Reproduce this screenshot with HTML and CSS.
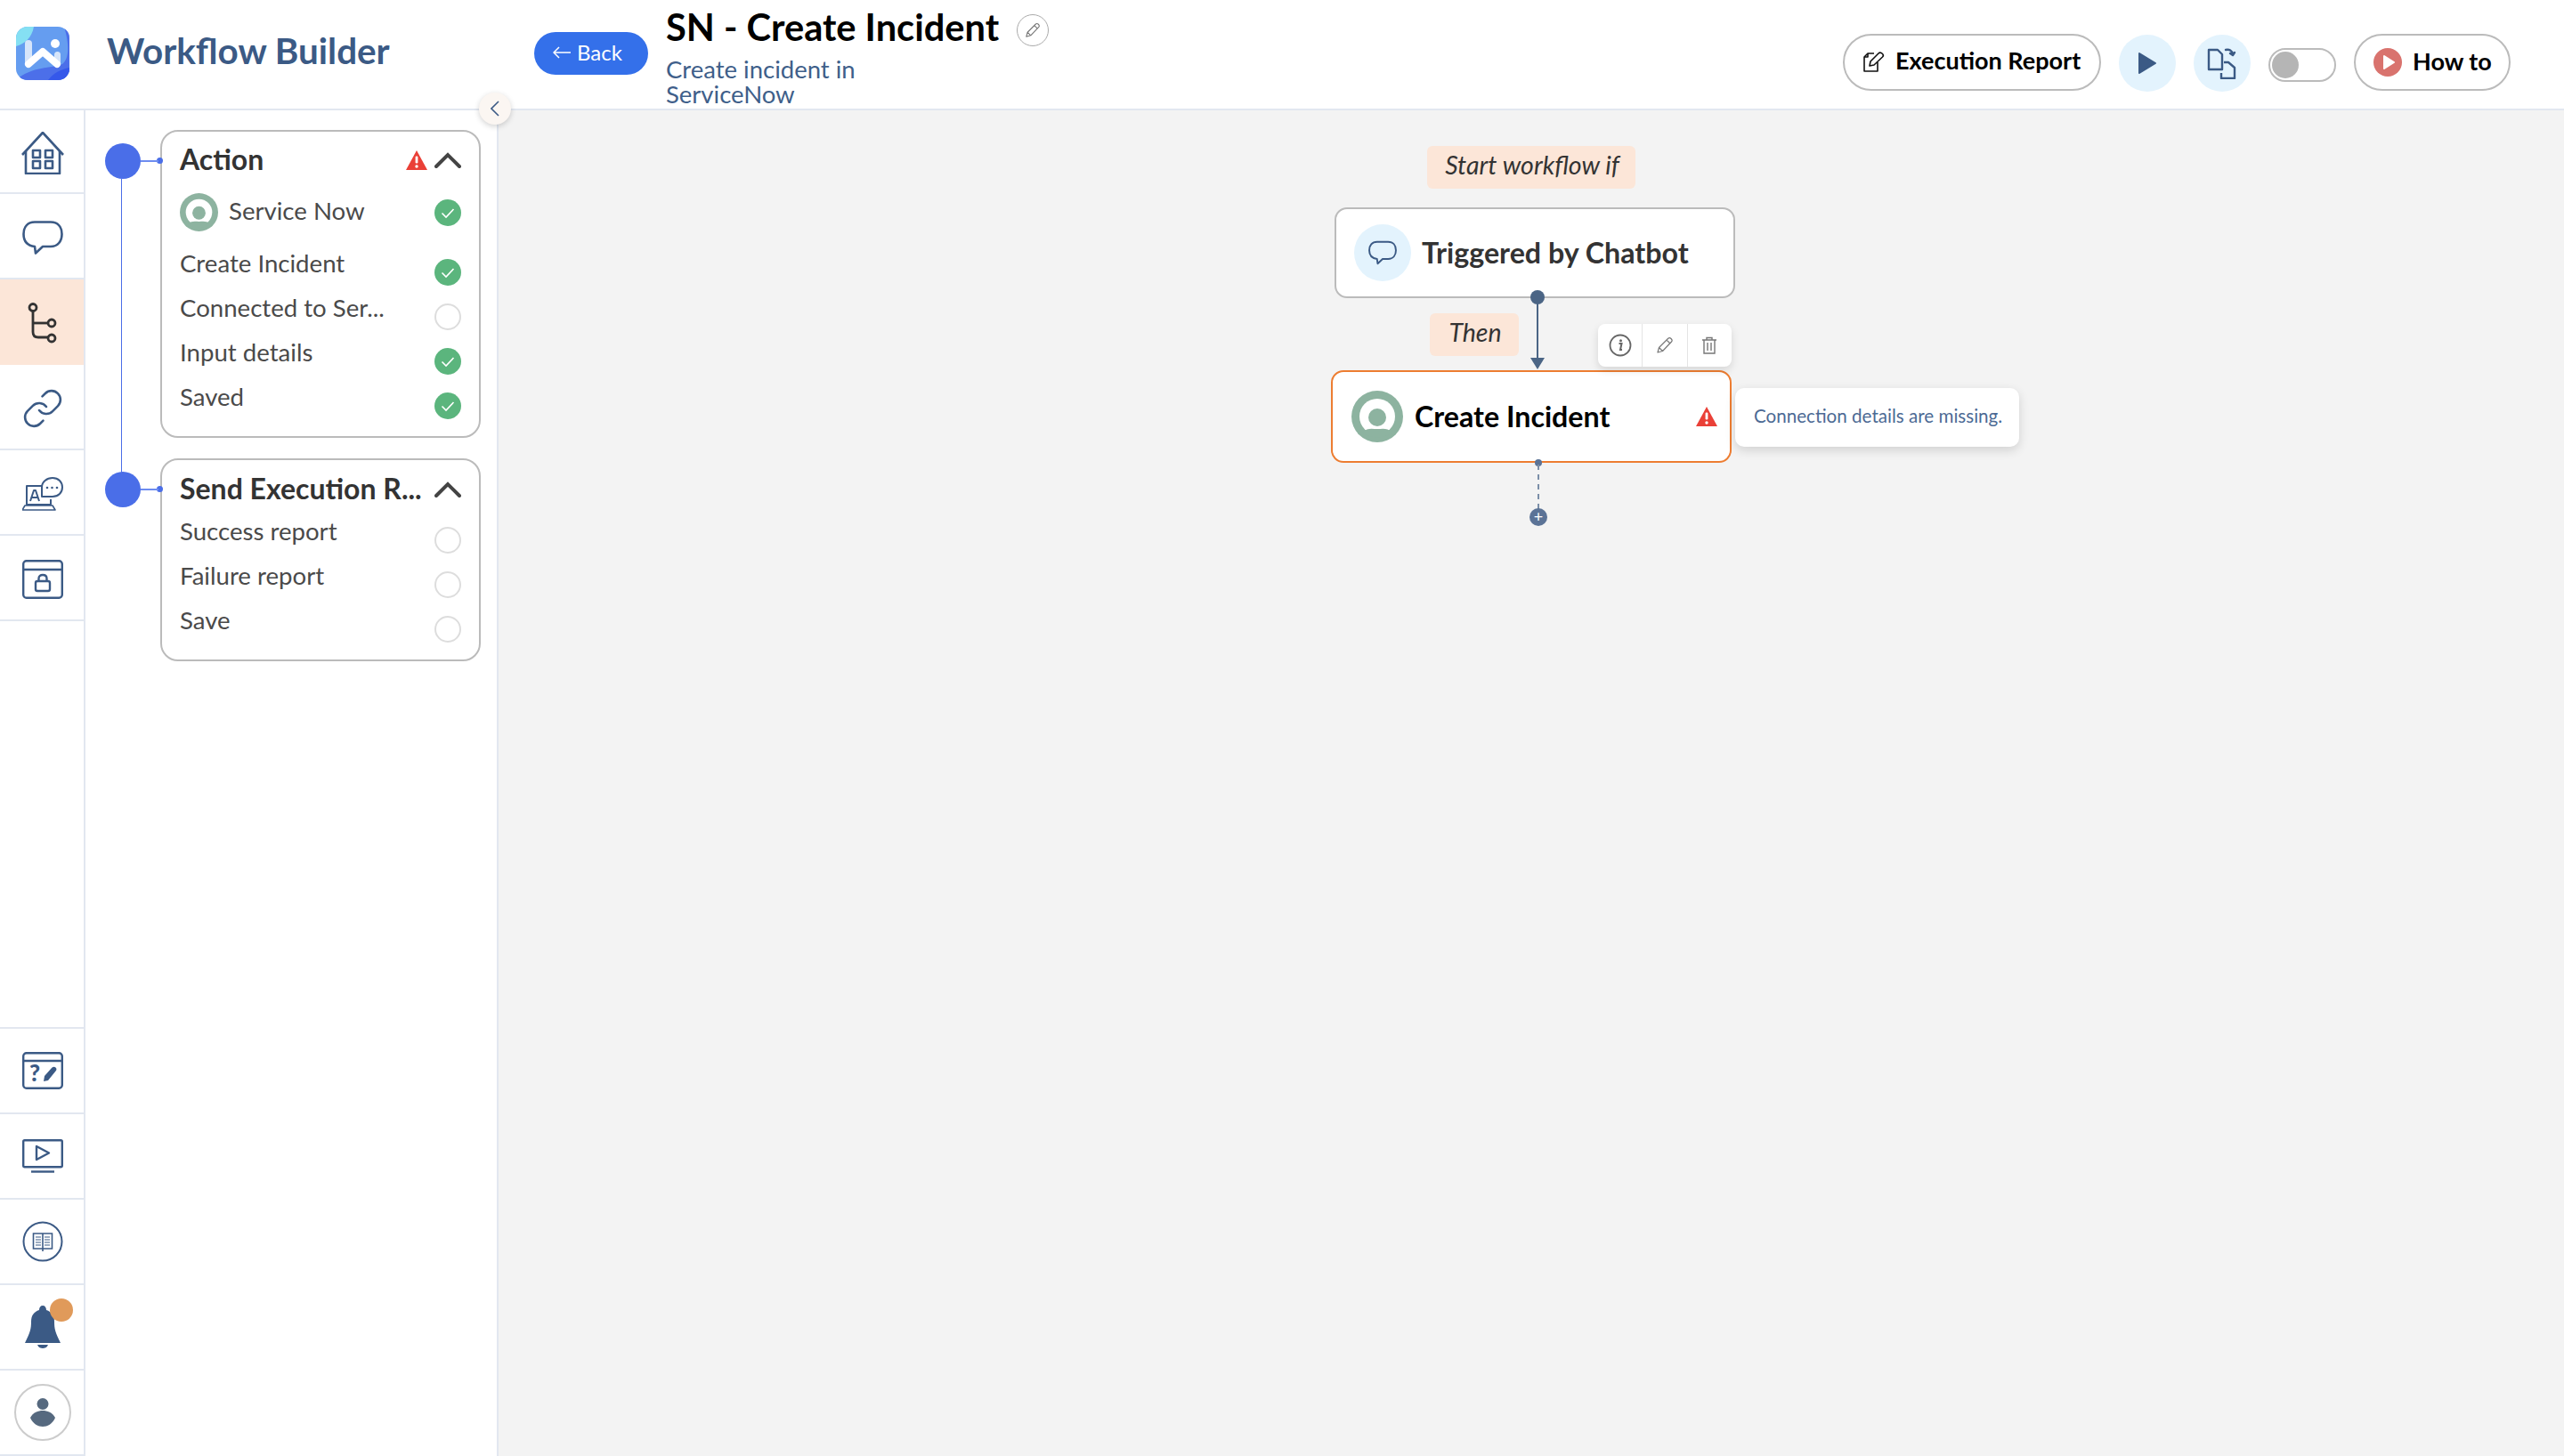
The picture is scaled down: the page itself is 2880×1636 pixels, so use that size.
FILE: index.html
```html
<!DOCTYPE html>
<html lang="en">
<head>
    <meta charset="UTF-8">
    <title>Workflow Builder</title>
    <link rel="stylesheet" href="styles.css">
</head>
<body>
    <!-- shared icons -->
    <svg class="icon-defs" width="0" height="0">
        <symbol id="sn-logo" viewBox="0 0 58 58">
            <circle cx="29" cy="29" r="29" fill="#8db3a0"/>
            <circle cx="29" cy="29" r="20" fill="#fff"/>
            <circle cx="29" cy="30" r="10" fill="#8db3a0"/>
            <path d="M12 47 C18 41 24 43 29 43 C34 43 40 41 46 47 C36 54 22 54 12 47Z" fill="#8db3a0"/>
        </symbol>
        <symbol id="warn" viewBox="0 0 24 22">
            <path d="M12 0 L24 22 H0Z" fill="#ea4037"/>
            <rect x="10.6" y="6.5" width="2.8" height="8" rx="1.2" fill="#fff"/>
            <circle cx="12" cy="18" r="1.7" fill="#fff"/>
        </symbol>
        <symbol id="check" viewBox="0 0 30 30">
            <circle cx="15" cy="15" r="15" fill="#5bb57d"/>
            <path d="M8.5 15.5 L13 20 L21.5 11" fill="none" stroke="#fff" stroke-width="1.6"/>
        </symbol>
        <symbol id="chevron" viewBox="0 0 30 18">
            <path d="M2 16 L15 3 L28 16" fill="none" stroke="#444" stroke-width="4" stroke-linecap="round"/>
        </symbol>
        <symbol id="pencil" viewBox="0 0 20 20">
            <path d="M2 18 L3.5 12.5 L13.5 2.5 C14.5 1.5 16 1.5 17 2.5 C18 3.5 18.5 5 17.5 6 L7.5 16.5Z M3.5 12.5 L7.5 16.5 M12 4 L16 8" fill="none" stroke="#777" stroke-width="1.2" stroke-linejoin="round"/>
        </symbol>
    </svg>

    <!-- Top bar -->
    <header class="topbar">
        <svg class="logo" width="60" height="60" viewBox="0 0 60 60">
            <defs><clipPath id="logo-clip"><rect width="60" height="60" rx="13"/></clipPath></defs>
            <g clip-path="url(#logo-clip)">
                <rect width="60" height="60" fill="#659df0"/>
                <path d="M0 0 H20 C18 12 10 19 0 22Z" fill="#85e0f3"/>
                <path d="M54 0 C60 20 60 36 52 42 C40 47 18 44 0 60 H60 V0Z" fill="#4c6fe9"/>
                <path d="M36 60 C42 52 50 48 60 46 V60Z" fill="#3558ea"/>
                <rect x="10" y="15" width="8" height="30" rx="4" fill="#d6e5fa"/>
                <rect x="43" y="28" width="7" height="16" rx="3.5" fill="#d6e5fa"/>
                <path d="M14 42 L30 28 L46 42" fill="none" stroke="#fff" stroke-width="8" stroke-linecap="round" stroke-linejoin="round"/>
                <circle cx="44" cy="19" r="5" fill="#fff"/>
            </g>
        </svg>
        <div class="brand">Workflow Builder</div>
        <button class="back-btn">
            <svg width="20" height="14" viewBox="0 0 20 14" fill="none" stroke="#fff" stroke-width="1.5"><path d="M20 7 H1 M7 1 L1 7 L7 13"/></svg>
            Back
        </button>
        <div class="title-block">
            <div class="title-row">
                <h1>SN - Create Incident</h1>
                <span class="edit-title"><svg width="18" height="18"><use href="#pencil"/></svg></span>
            </div>
            <p class="subtitle">Create incident in ServiceNow</p>
        </div>
        <div class="top-actions">
            <button class="pill report-btn">
                <svg width="25" height="24" viewBox="0 0 25 24" fill="none" stroke="#111" stroke-width="1.6" stroke-linejoin="round">
                    <path d="M13 2 H6 L2 6 V22 H17 V12"/>
                    <path d="M6 2 V6 H2"/>
                    <path d="M8 16 L9 11 L18 2 C19 1 21 1 22.5 2.5 C23.5 3.5 23.5 5 22.5 6 L13 15Z"/>
                </svg>
                Execution Report
            </button>
            <span class="round-btn">
                <svg width="22" height="26" viewBox="0 0 22 26"><path d="M2 2 L20 13 L2 24Z" fill="#3b5a85" stroke="#3b5a85" stroke-width="2" stroke-linejoin="round"/></svg>
            </span>
            <span class="round-btn">
                <svg width="34" height="36" viewBox="0 0 34 36" fill="none" stroke="#3b5a85" stroke-width="2.4" stroke-linejoin="round">
                    <path d="M2 3 H12 L17 8 V25 H2Z"/>
                    <path d="M19 17 H24 L31 23 V35 H16 V29"/>
                    <path d="M21 3 C25 2 28 4 29 8 M26 7 L29 9 L31 6" stroke-linecap="round"/>
                </svg>
            </span>
            <span class="toggle"><span class="knob"></span></span>
            <button class="pill howto-btn">
                <svg width="32" height="32" viewBox="0 0 32 32">
                    <circle cx="16" cy="16" r="16" fill="#d9736e"/>
                    <path d="M12 9 L23 16 L12 23Z" fill="#fff" stroke="#fff" stroke-width="2" stroke-linejoin="round"/>
                </svg>
                How to
            </button>
        </div>
    </header>

    <div class="main">
        <!-- Icon rail -->
        <nav class="rail">
            <div class="rail-group rail-top">
                <a class="rail-item rail-first">
                    <svg width="48" height="48" viewBox="0 0 48 48" fill="none" stroke="#3b5a85" stroke-width="2.6" stroke-linejoin="round">
                        <path d="M1 26 L24 1 L47 26"/>
                        <path d="M5 22 V47 H43 V22"/>
                        <rect x="13" y="21" width="8" height="8"/>
                        <rect x="27" y="21" width="8" height="8"/>
                        <rect x="13" y="33" width="8" height="8"/>
                        <rect x="27" y="33" width="8" height="8"/>
                    </svg>
                </a>
                <a class="rail-item">
                    <svg width="46" height="38" viewBox="0 0 46 38" fill="none" stroke="#3b5a85" stroke-width="2.6" stroke-linejoin="round">
                        <path d="M14 1.5 H32 C40 1.5 44.5 7 44.5 15 C44.5 23 40 29 32 29 H23 L15 36.5 L14 29 C6 28 1.5 23 1.5 15 C1.5 7 6 1.5 14 1.5Z"/>
                    </svg>
                </a>
                <a class="rail-item active">
                    <svg width="34" height="46" viewBox="0 0 34 46" fill="none" stroke="#333" stroke-width="2.8">
                        <circle cx="6" cy="5.5" r="4"/>
                        <path d="M6 10 V33 C6 37 8 39 12 39 H23"/>
                        <path d="M6 23 H23"/>
                        <circle cx="27" cy="23" r="4"/>
                        <circle cx="27" cy="40" r="4"/>
                    </svg>
                </a>
                <a class="rail-item">
                    <svg width="48" height="48" viewBox="0 0 24 24" fill="none" stroke="#3b5a85" stroke-width="1.3" stroke-linecap="round" stroke-linejoin="round">
                        <path d="M10 13a5 5 0 0 0 7.54.54l3-3a5 5 0 0 0-7.07-7.07l-1.72 1.71"/>
                        <path d="M14 11a5 5 0 0 0-7.54-.54l-3 3a5 5 0 0 0 7.07 7.07l1.71-1.71"/>
                    </svg>
                </a>
                <a class="rail-item">
                    <svg width="46" height="38" viewBox="0 0 46 38" fill="none" stroke="#3b5a85" stroke-width="2" stroke-linejoin="round">
                        <path d="M22 10 H5 V31 H32 V25"/>
                        <path d="M0 37 L3 32 H34 L37 37Z" stroke-width="1.6"/>
                        <path d="M9 27 L13 15 H15 L19 27 M10.5 23 H17.5"/>
                        <path d="M34 1 C40.5 1 45 5.5 45 11.5 C45 17.5 40.5 22 34 22 H22 V11.5 C22 5.5 27.5 1 34 1Z"/>
                        <circle cx="28" cy="12" r="1.3" fill="#3b5a85" stroke="none"/>
                        <circle cx="33.5" cy="12" r="1.3" fill="#3b5a85" stroke="none"/>
                        <circle cx="39" cy="12" r="1.3" fill="#3b5a85" stroke="none"/>
                    </svg>
                </a>
                <a class="rail-item">
                    <svg width="46" height="44" viewBox="0 0 46 44" fill="none" stroke="#3b5a85" stroke-width="2.4" stroke-linejoin="round">
                        <rect x="1.2" y="1.2" width="43.6" height="41.6" rx="3.5"/>
                        <path d="M1 11 H45"/>
                        <rect x="15" y="24" width="16" height="11" rx="2"/>
                        <path d="M18.5 24 V21 C18.5 18 20.5 17 23 17 C25.5 17 27.5 18 27.5 21 V24"/>
                    </svg>
                </a>
            </div>
            <div class="rail-group rail-bottom">
                <a class="rail-item">
                    <svg width="46" height="42" viewBox="0 0 46 42" fill="none" stroke="#3b5a85" stroke-width="2.4" stroke-linejoin="round">
                        <rect x="1.2" y="1.2" width="43.6" height="39.6" rx="3.5"/>
                        <path d="M1 10 H45"/>
                        <text x="8" y="33" class="help-mark">?</text>
                        <path d="M24 33 L25 27 L33 18 C34.5 16.5 36.5 16.5 37.5 17.5 C39 19 38.5 20.5 37.5 21.5 L29 32Z" fill="#3b5a85" stroke="none"/>
                    </svg>
                </a>
                <a class="rail-item">
                    <svg width="46" height="38" viewBox="0 0 46 38" fill="none" stroke="#3b5a85" stroke-width="2.4" stroke-linejoin="round">
                        <rect x="1.2" y="1.2" width="43.6" height="30" rx="1.5"/>
                        <path d="M16 8 L30 15.5 L16 23Z"/>
                        <path d="M10 36.5 H36"/>
                    </svg>
                </a>
                <a class="rail-item">
                    <svg width="46" height="46" viewBox="0 0 46 46" fill="none" stroke="#3b5a85">
                        <circle cx="23" cy="23" r="21.5" stroke-width="2"/>
                        <path d="M12.5 14 H33.5 V31 H12.5Z M23 14 V34" stroke-width="1.6"/>
                        <path d="M15 18 H21 M15 21 H21 M15 24 H21 M15 27 H21 M25 18 H31 M25 21 H31 M25 24 H31 M25 27 H31" stroke-width="1.2"/>
                    </svg>
                </a>
                <a class="rail-item bell-item">
                    <svg width="40" height="48" viewBox="0 0 40 48">
                        <path d="M20 0 C22.5 0 24 2 24 5 C30 7 33 11 33 18 C33 26 34 30 40 42 H0 C6 30 7 26 7 18 C7 11 10 7 16 5 C16 2 17.5 0 20 0Z" fill="#3b5a85"/>
                        <path d="M14 44 H26 C25 47 22 48 20 48 C18 48 15 47 14 44Z" fill="#3b5a85"/>
                    </svg>
                    <span class="badge"></span>
                </a>
                <a class="rail-item">
                    <span class="avatar">
                        <svg width="28" height="32" viewBox="0 0 28 32" fill="#56697f">
                            <circle cx="14" cy="6.5" r="6.5"/>
                            <path d="M0 22 C3 16 9 14 14 14 C19 14 25 16 28 22 C25 29 19 32 14 32 C9 32 3 29 0 22Z"/>
                        </svg>
                    </span>
                </a>
            </div>
        </nav>

        <!-- Steps panel -->
        <aside class="panel">
            <span class="collapse-btn">
                <svg width="10" height="18" viewBox="0 0 10 18"><path d="M9 1 L1 9 L9 17" fill="none" stroke="#3b5a85" stroke-width="1.6"/></svg>
            </span>
            <div class="step">
                <span class="step-dot"><span class="step-line"></span></span>
                <div class="card">
                    <div class="card-head">
                        <span class="card-title">Action</span>
                        <svg class="head-warn" width="24" height="22"><use href="#warn"/></svg>
                        <svg width="30" height="18"><use href="#chevron"/></svg>
                    </div>
                    <div class="row row-app">
                        <span class="row-label">
                            <svg width="43" height="43"><use href="#sn-logo"/></svg>
                            <span class="app-name">Service Now</span>
                        </span>
                        <svg class="check" width="30" height="30"><use href="#check"/></svg>
                    </div>
                    <div class="row">
                        <span class="row-label">Create Incident</span>
                        <svg class="check" width="30" height="30"><use href="#check"/></svg>
                    </div>
                    <div class="row">
                        <span class="row-label">Connected to Ser...</span>
                        <span class="check empty"></span>
                    </div>
                    <div class="row">
                        <span class="row-label">Input details</span>
                        <svg class="check" width="30" height="30"><use href="#check"/></svg>
                    </div>
                    <div class="row">
                        <span class="row-label">Saved</span>
                        <svg class="check" width="30" height="30"><use href="#check"/></svg>
                    </div>
                </div>
            </div>
            <div class="step">
                <span class="step-dot"></span>
                <div class="card card-send">
                    <div class="card-head">
                        <span class="card-title">Send Execution R...</span>
                        <svg width="30" height="18"><use href="#chevron"/></svg>
                    </div>
                    <div class="row">
                        <span class="row-label">Success report</span>
                        <span class="check empty"></span>
                    </div>
                    <div class="row">
                        <span class="row-label">Failure report</span>
                        <span class="check empty"></span>
                    </div>
                    <div class="row">
                        <span class="row-label">Save</span>
                        <span class="check empty"></span>
                    </div>
                </div>
            </div>
        </aside>

        <!-- Workflow canvas, nodes are placed freely -->
        <section class="canvas">
            <div class="tag tag-start">Start workflow if</div>
            <div class="node node-trigger">
                <span class="node-icon">
                    <svg width="32" height="28" viewBox="0 0 46 38" fill="none" stroke="#3b5a85" stroke-width="2.8" stroke-linejoin="round">
                        <path d="M14 1.5 H32 C40 1.5 44.5 7 44.5 15 C44.5 23 40 29 32 29 H23 L15 36.5 L14 29 C6 28 1.5 23 1.5 15 C1.5 7 6 1.5 14 1.5Z"/>
                    </svg>
                </span>
                <span class="node-name">Triggered by Chatbot</span>
            </div>
            <span class="port port-top"></span>
            <span class="link-line"></span>
            <span class="link-arrow"></span>
            <div class="tag tag-then">Then</div>
            <div class="node-tools">
                <span class="tool">
                    <svg width="26" height="26" viewBox="0 0 26 26">
                        <circle cx="13" cy="13" r="11.5" fill="none" stroke="#666" stroke-width="1.8"/>
                        <circle cx="13.5" cy="7.8" r="1.5" fill="#666"/>
                        <path d="M11.5 11 H14.5 L13 18 H15" fill="none" stroke="#666" stroke-width="2"/>
                    </svg>
                </span>
                <span class="tool"><svg width="20" height="20"><use href="#pencil"/></svg></span>
                <span class="tool">
                    <svg width="18" height="20" viewBox="0 0 18 20" fill="none" stroke="#777" stroke-width="1.4">
                        <path d="M1 4 H17 M6 4 V1.5 H12 V4 M3 4 V19 H15 V4 M7 7 V16 M11 7 V16"/>
                    </svg>
                </span>
            </div>
            <div class="node node-action">
                <svg width="58" height="58"><use href="#sn-logo"/></svg>
                <span class="node-name">Create Incident</span>
                <svg class="node-warn" width="24" height="22"><use href="#warn"/></svg>
            </div>
            <span class="port port-small"></span>
            <span class="link-dashed"></span>
            <span class="add-node">+</span>
            <div class="node-tip">Connection details are missing.</div>
        </section>
    </div>
</body>
</html>
```
FILE: styles.css
```css
* {
    box-sizing: border-box;
}
body {
    margin: 0;
    height: 1636px;
    display: flex;
    flex-direction: column;
    background-color: #fff;
    font-family: 'Lato', sans-serif;
    overflow: hidden;
}
button {
    font-family: inherit;
    cursor: pointer;
}
.icon-defs {
    position: absolute;
}

/* top bar */
.topbar {
    display: flex;
    align-items: flex-start;
    height: 124px;
    flex: none;
    border-bottom: 2px solid #e2e7f0;
}
.logo {
    margin: 30px 0 0 18px;
    flex: none;
}
.brand {
    width: 480px;
    margin: 35px 0 0 42px;
    font-size: 40.4px;
    line-height: 44px;
    font-weight: 700;
    color: #3b5a85;
    flex: none;
}
.back-btn {
    display: flex;
    align-items: center;
    gap: 7px;
    width: 128px;
    height: 48px;
    padding: 0 0 3px 21px;
    margin-top: 36px;
    border: none;
    border-radius: 24px;
    background-color: #3470ea;
    color: #fff;
    font-size: 24px;
    flex: none;
}
.title-block {
    margin: 5px 0 0 20px;
}
.title-row {
    display: flex;
    align-items: center;
    gap: 20px;
}
.title-row h1 {
    margin: 0;
    font-size: 41.6px;
    line-height: 50px;
    font-weight: 700;
    color: #000;
}
.edit-title {
    display: flex;
    align-items: center;
    justify-content: center;
    width: 36px;
    height: 36px;
    margin-top: 7px;
    border: 1px solid #aaa;
    border-radius: 50%;
}
.subtitle {
    width: 240px;
    margin: 9px 0 0;
    font-size: 27.5px;
    line-height: 28px;
    color: #3f5f8a;
}
.top-actions {
    display: flex;
    align-items: center;
    gap: 20px;
    margin: 37px 60px 0 auto;
}
.pill {
    display: flex;
    align-items: center;
    height: 64px;
    border: 2px solid #bbb;
    border-radius: 32px;
    background-color: #fff;
    color: #000;
    font-size: 27px;
    font-weight: 700;
}
.report-btn {
    width: 290px;
    gap: 12px;
    padding: 0 0 5px 20px;
}
.report-btn svg {
    margin-top: 5px;
}
.howto-btn {
    width: 176px;
    gap: 12px;
    padding: 0 0 4px 20px;
}
.howto-btn svg {
    margin-top: 4px;
}
.round-btn {
    display: flex;
    align-items: center;
    justify-content: center;
    width: 64px;
    height: 64px;
    margin-top: 2px;
    border-radius: 50%;
    background-color: #e3f3fd;
}
.toggle {
    display: block;
    width: 76px;
    height: 38px;
    padding: 2px;
    margin-top: 6px;
    border: 2px solid #bbb;
    border-radius: 19px;
}
.knob {
    display: block;
    width: 30px;
    height: 30px;
    border-radius: 50%;
    background-color: #b5b5b5;
}

/* layout under the top bar */
.main {
    display: flex;
    flex: 1;
    min-height: 0;
}
.rail {
    display: flex;
    flex-direction: column;
    justify-content: space-between;
    width: 96px;
    flex: none;
    border-right: 2px solid #e2e7f0;
}
.rail-item {
    position: relative;
    display: flex;
    align-items: center;
    justify-content: center;
    height: 96px;
    padding-left: 2px;
    border-bottom: 2px solid #e2e7f0;
}
.rail-top .rail-item {
    padding-top: 3px;
}
.rail-first {
    height: 94px;
}
.rail-bottom .rail-item:first-child {
    border-top: 2px solid #e2e7f0;
    height: 98px;
}
.rail-item.active {
    background-color: #fce6d8;
    border-bottom-color: #fce6d8;
}
.help-mark {
    font-family: 'Lato', sans-serif;
    font-size: 26px;
    font-weight: 900;
    fill: #3b5a85;
    stroke: none;
}
.badge {
    position: absolute;
    top: 15px;
    left: 56px;
    width: 26px;
    height: 26px;
    border-radius: 50%;
    background-color: #e09a5a;
}
.avatar {
    display: flex;
    align-items: center;
    justify-content: center;
    width: 64px;
    height: 64px;
    border: 2px solid #ccc;
    border-radius: 50%;
}

/* steps panel */
.panel {
    position: relative;
    display: flex;
    flex-direction: column;
    gap: 23px;
    width: 464px;
    flex: none;
    padding: 22px 0 0 22px;
    border-right: 2px solid #e2e7f0;
}
.collapse-btn {
    position: absolute;
    top: -20px;
    right: -16px;
    z-index: 2;
    display: flex;
    align-items: center;
    justify-content: center;
    width: 36px;
    height: 36px;
    border-radius: 50%;
    background-color: #fbf6f2;
    box-shadow: 0 2px 6px rgba(0, 0, 0, 0.18);
}
.step {
    display: flex;
    align-items: flex-start;
    gap: 22px;
}
.step-dot {
    position: relative;
    width: 40px;
    height: 40px;
    margin-top: 15px;
    flex: none;
    border-radius: 50%;
    background-color: #4a6ee8;
}
.step-dot::after {
    content: "";
    position: absolute;
    top: 19px;
    left: 40px;
    width: 20px;
    height: 2px;
    background-color: #6d8cf0;
}
.step-dot::before {
    content: "";
    position: absolute;
    top: 16px;
    left: 58px;
    width: 7px;
    height: 7px;
    border-radius: 50%;
    background-color: #4a6ee8;
}
.step-line {
    position: absolute;
    top: 40px;
    left: 18px;
    width: 1px;
    height: 330px;
    background-color: #4a6ee8;
}
.card {
    width: 360px;
    padding: 10px 20px 9px 20px;
    border: 2px solid #bbb;
    border-radius: 20px;
    background-color: #fff;
}
.card-send {
    padding-top: 11px;
}
.card-head {
    display: flex;
    align-items: center;
    height: 44px;
    margin-bottom: 10px;
}
.card-title {
    flex: 1;
    margin-top: -3px;
    font-size: 32px;
    font-weight: 700;
    color: #333;
    white-space: nowrap;
}
.head-warn {
    margin-right: 8px;
}
.row {
    display: flex;
    justify-content: space-between;
    align-items: flex-start;
    height: 50px;
}
.row-label {
    display: flex;
    align-items: center;
    gap: 12px;
    font-size: 27.6px;
    line-height: 30px;
    color: #4a4a4a;
}
.app-name {
    margin-top: -4px;
}
.check {
    display: block;
    width: 30px;
    height: 30px;
    margin-top: 10px;
    flex: none;
}
.check.empty {
    border: 2px solid #ddd;
    border-radius: 50%;
}
.row-app {
    height: 53px;
    margin-bottom: 16px;
    align-items: center;
}
.row-app .check {
    margin-top: 0;
}

/* canvas */
.canvas {
    position: relative;
    flex: 1;
    background-color: #f3f3f3;
}
.tag {
    position: absolute;
    height: 48px;
    padding-left: 2px;
    border-radius: 6px;
    background-color: #fce6d8;
    color: #333;
    font-size: 28.5px;
    font-style: italic;
    line-height: 42px;
    text-align: center;
}
.tag-start {
    left: 1043px;
    top: 40px;
    width: 234px;
}
.tag-then {
    left: 1046px;
    top: 228px;
    width: 100px;
}
.node {
    position: absolute;
    display: flex;
    align-items: center;
    background-color: #fff;
    border-radius: 14px;
    font-size: 32.2px;
    font-weight: 700;
}
.node-name {
    margin-top: -2px;
}
.node-trigger {
    left: 939px;
    top: 109px;
    width: 450px;
    height: 102px;
    gap: 12px;
    padding-left: 20px;
    border: 2px solid #bbb;
    color: #333;
}
.node-icon {
    display: flex;
    align-items: center;
    justify-content: center;
    width: 64px;
    height: 64px;
    border-radius: 50%;
    background-color: #e3f3fd;
}
.node-action {
    left: 935px;
    top: 292px;
    width: 450px;
    height: 104px;
    gap: 13px;
    padding-left: 21px;
    border: 2px solid #ed7d31;
    color: #000;
}
.node-warn {
    position: absolute;
    left: 408px;
    top: 39px;
}
.port {
    position: absolute;
    border-radius: 50%;
    background-color: #4b6585;
}
.port-top {
    left: 1159px;
    top: 202px;
    width: 16px;
    height: 16px;
}
.port-small {
    left: 1164px;
    top: 392px;
    width: 8px;
    height: 8px;
    background-color: #5b7396;
}
.link-line {
    position: absolute;
    left: 1166px;
    top: 216px;
    width: 2px;
    height: 64px;
    background-color: #4b6585;
}
.link-arrow {
    position: absolute;
    left: 1159px;
    top: 278px;
    border-top: 13px solid #4b6585;
    border-left: 8px solid transparent;
    border-right: 8px solid transparent;
}
.link-dashed {
    position: absolute;
    left: 1167px;
    top: 398px;
    height: 50px;
    border-left: 2px dashed #7b8ea8;
}
.add-node {
    position: absolute;
    left: 1158px;
    top: 447px;
    width: 20px;
    height: 20px;
    border-radius: 50%;
    background-color: #5b7396;
    color: #fff;
    font-size: 18px;
    line-height: 19px;
    text-align: center;
}
.node-tools {
    position: absolute;
    left: 1235px;
    top: 240px;
    display: flex;
    width: 150px;
    height: 48px;
    border-radius: 8px;
    background-color: #fff;
    box-shadow: 0 4px 10px rgba(0, 0, 0, 0.12);
    z-index: 1;
}
.tool {
    display: flex;
    align-items: center;
    justify-content: center;
    flex: 1;
    border-left: 1px solid #e4e4e4;
}
.tool:first-child {
    border-left: none;
}
.node-tip {
    position: absolute;
    left: 1389px;
    top: 312px;
    width: 319px;
    height: 66px;
    padding-left: 21px;
    border-radius: 10px;
    background-color: #fff;
    box-shadow: 0 4px 12px rgba(0, 0, 0, 0.14);
    color: #4c6a94;
    font-size: 20.6px;
    line-height: 62px;
    white-space: nowrap;
}
```
